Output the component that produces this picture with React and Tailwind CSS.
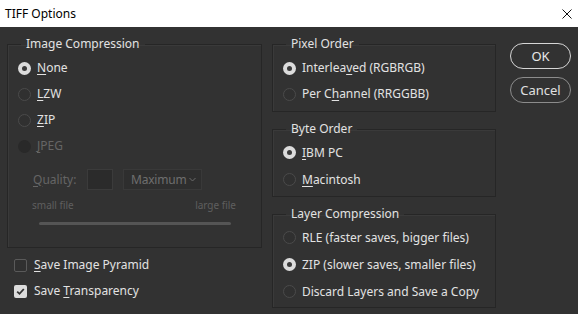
const font = { fontFamily: '"Noto Sans", "Open Sans", sans-serif' }

function Radio({ checked, disabled }) {
  if (checked) {
    return (
      <span className="w-[13px] h-[13px] rounded-full bg-[#dcdcdc] flex items-center justify-center shrink-0">
        <span className="w-[5px] h-[5px] rounded-full bg-[#3a3a3a]" />
      </span>
    )
  }
  if (disabled) {
    return <span className="w-[13px] h-[13px] rounded-full bg-[#292929] shrink-0" />
  }
  return <span className="w-[13px] h-[13px] rounded-full border border-[#4b4b4b] bg-[#303030] shrink-0" />
}

function Option({ checked, disabled, tall, children }) {
  return (
    <div className={`${tall ? 'h-[27px]' : 'h-[26px]'} flex items-center gap-[6px] pl-[10px]`}>
      <Radio checked={checked} disabled={disabled} />
      <span className={disabled ? 'text-[#656565]' : 'text-[#e2e2e2]'}>{children}</span>
    </div>
  )
}

function Group({ title, className = '', children }) {
  return (
    <fieldset className={`border border-[#262626] shadow-[inset_1px_1px_0_#3a3a3a] px-0 ${className}`}>
      <legend className="ml-[13px] px-[5px] leading-[16px] text-[#e2e2e2]">{title}</legend>
      {children}
    </fieldset>
  )
}

function Checkbox({ checked, children }) {
  return (
    <div className="h-[26px] flex items-center gap-[7px] pl-[7px]">
      {checked ? (
        <span className="w-[13px] h-[13px] rounded-[2px] bg-[#dcdcdc] flex items-center justify-center">
          <svg width="9" height="9" viewBox="0 0 9 9" fill="none">
            <path d="M1.2 4.6 L3.5 6.8 L7.8 2" stroke="#333" strokeWidth="1.8" />
          </svg>
        </span>
      ) : (
        <span className="w-[13px] h-[13px] rounded-[2px] border border-[#5a5a5a] bg-[#303030]" />
      )}
      <span className="text-[#e2e2e2]">{children}</span>
    </div>
  )
}

const U = ({ children }) => <span className="underline underline-offset-2">{children}</span>

export default function App() {
  return (
    <div className="w-[578px] h-[314px] bg-[#323232] flex flex-col text-[12px] overflow-hidden" style={font}>
      {/* title bar */}
      <div className="h-[27px] bg-white flex items-center justify-between pl-[5px] pr-[6px] shrink-0">
        <span className="text-black text-[12px]">TIFF Options</span>
        <svg width="10" height="10" viewBox="0 0 10 10">
          <path d="M0.5 0.5 L9.5 9.5 M9.5 0.5 L0.5 9.5" stroke="#111" strokeWidth="1" />
        </svg>
      </div>

      <div className="flex pt-[9px] pl-[7px]">
        {/* left column */}
        <div className="w-[255px] flex flex-col">
          <Group title="Image Compression" className="pt-[3px] pb-[22px]">
            <Option checked><U>N</U>one</Option>
            <Option><U>L</U>ZW</Option>
            <Option><U>Z</U>IP</Option>
            <Option disabled><U>J</U>PEG</Option>
            <div className="mt-[10px] h-[21px] flex items-center pl-[25px] text-[#656565]">
              <span className="w-[54px]"><U>Q</U>uality:</span>
              <span className="w-[26px] h-[21px] bg-[#2b2b2b] border border-[#3b3b3b]" />
              <span className="ml-[10px] w-[79px] h-[21px] bg-[#2e2e2e] border border-[#393939] flex items-center justify-between pl-[7px] pr-[5px] text-[#6e6e6e]">
                <span className="tracking-[-0.2px]">Maximum</span>
                <svg width="7" height="5" viewBox="0 0 7 5" fill="none">
                  <path d="M0.5 1 L3.5 4 L6.5 1" stroke="#6a6a6a" strokeWidth="1" />
                </svg>
              </span>
            </div>
            <div className="mt-[9px] flex justify-between pl-[24px] pr-[25px] text-[10px] leading-[12px] text-[#5f5f5f]">
              <span>small file</span>
              <span>large file</span>
            </div>
            <div className="mt-[11px] ml-[31px] w-[192px] h-[3px] bg-[#555555] rounded-full" />
          </Group>
          <div className="mt-[4px]">
            <Checkbox><U>S</U>ave Image Pyramid</Checkbox>
            <Checkbox checked>Save <U>T</U>ransparency</Checkbox>
          </div>
        </div>

        {/* middle column */}
        <div className="w-[224px] ml-[10px] flex flex-col gap-[9px]">
          <Group title="Pixel Order" className="pt-[3px] pb-[4px]">
            <Option checked>Interlea<U>v</U>ed (RGBRGB)</Option>
            <Option>Per C<U>h</U>annel (RRGGBB)</Option>
          </Group>
          <Group title="Byte Order" className="pt-[2px] pb-[3px]">
            <Option tall checked><U>I</U>BM PC</Option>
            <Option tall><U>M</U>acintosh</Option>
          </Group>
          <Group title="Layer Compression" className="pt-[2px] pb-[2px]">
            <Option tall>RLE (faster saves, bigger files)</Option>
            <Option tall checked>ZIP (slower saves, smaller files)</Option>
            <Option tall>Discard Layers and Save a Copy</Option>
          </Group>
        </div>

        {/* buttons */}
        <div className="ml-[14px] pt-[7px] flex flex-col gap-[8px]">
          <button className="w-[61px] h-[26px] rounded-full border-[1.5px] border-[#d6d6d6] text-[#e8e8e8] text-[13px] leading-none">OK</button>
          <button className="w-[61px] h-[26px] rounded-full border-[1.5px] border-[#8c8c8c] text-[#e0e0e0] text-[13px] leading-none">Cancel</button>
        </div>
      </div>
    </div>
  )
}
